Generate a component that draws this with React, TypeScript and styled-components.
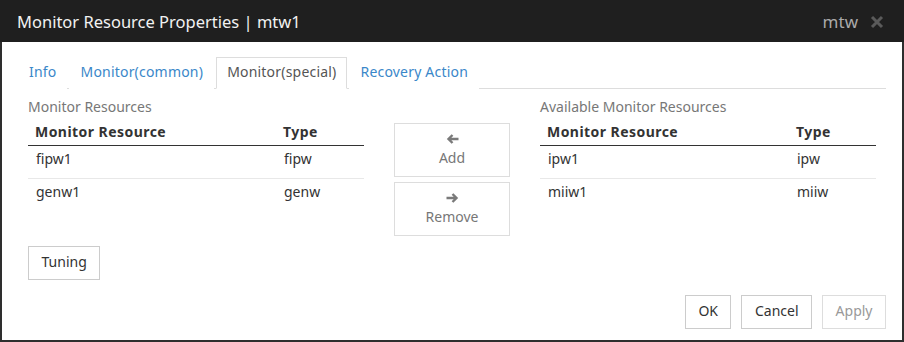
import React from "react"
import styled, { createGlobalStyle } from "styled-components"

const GlobalStyle = createGlobalStyle`
  body {
    margin: 0;
    font-family: "Noto Sans", "Liberation Sans", sans-serif;
    font-size: 14px;
    color: #333;
  }
  * { box-sizing: border-box; }
`

const Window = styled.div`
  width: 904px;
  height: 342px;
  border: 2px solid #2e2e2e;
  border-top: none;
  background: #fff;
  display: flex;
  flex-direction: column;
`

const Header = styled.header`
  height: 42px;
  flex: none;
  background: #1f1f1f;
  display: flex;
  align-items: center;
  margin: 0 -2px;
  padding: 0 20px 0 17px;
`

const Title = styled.h1`
  margin: 0;
  flex: 1;
  font-size: 16.5px;
  font-weight: normal;
  color: #f2f2f2;
`

const HostName = styled.span`
  font-size: 17px;
  color: #aaa;
  margin-right: 12px;
`

const CloseButton = styled.button`
  border: none;
  background: none;
  padding: 0;
  margin-top: 2px;
  width: 14px;
  height: 14px;
  display: flex;
  cursor: pointer;
`

const Body = styled.div`
  padding: 15px 16px 0;
  display: flex;
  flex-direction: column;
`

const TabBar = styled.ul`
  list-style: none;
  margin: 0;
  padding: 0;
  display: flex;
  border-bottom: 1px solid #ddd;
`

const Tab = styled.li<{ $active?: boolean }>`
  margin: 0 2px -1px 0;
  padding: 4px 10px 6px;
  line-height: 20px;
  letter-spacing: 0.2px;
  border: 1px solid ${p => (p.$active ? "#ddd" : "transparent")};
  border-bottom-color: ${p => (p.$active ? "#fff" : "transparent")};
  background: #fff;
  color: ${p => (p.$active ? "#555" : "#3a87c9")};
  cursor: pointer;
`

const Pane = styled.div`
  padding: 8px 10px 0;
`

const Columns = styled.div`
  display: grid;
  grid-template-columns: 336px 116px 336px;
  column-gap: 30px;
  align-items: start;
`

const Label = styled.div`
  line-height: 20px;
  color: #777;
`

const Table = styled.div<{ $nameWidth: number }>`
  display: grid;
  grid-template-columns: ${p => p.$nameWidth}px 1fr;
`

const HeadCell = styled.div`
  padding: 5px 8px 3px 7px;
  line-height: 20px;
  font-weight: bold;
  letter-spacing: 0.45px;
  color: #333;
  border-bottom: 1px solid #333;
`

const Cell = styled.div<{ $last?: boolean }>`
  padding: 3px 8px 9px;
  line-height: 20px;
  color: #333;
  border-bottom: 1px solid ${p => (p.$last ? "transparent" : "#e8e8e8")};
`

const Mover = styled.div`
  margin-top: 26px;
  display: flex;
  flex-direction: column;
  gap: 5px;
`

const MoveButton = styled.button`
  height: 54px;
  border: 1px solid #ddd;
  background: #fff;
  color: #777;
  font: inherit;
  line-height: 20px;
  display: flex;
  flex-direction: column;
  align-items: center;
  justify-content: center;
  gap: 4px;
  padding: 2px 0 0;
`

const Button = styled.button<{ $disabled?: boolean }>`
  height: 34px;
  padding: 0 12.5px 3px;
  font: inherit;
  line-height: 20px;
  background: #fff;
  color: ${p => (p.$disabled ? "#999" : "#333")};
  border: 1px solid ${p => (p.$disabled ? "#ddd" : "#ccc")};
`

const TuningRow = styled.div`
  margin-top: 10px;
`

const Footer = styled.div`
  margin-top: 15px;
  display: flex;
  justify-content: flex-end;
  gap: 10px;
`

const Arrow = ({ dir }: { dir: "left" | "right" }) => (
  <svg width="13" height="10" viewBox="0 0 13 10" style={{ display: "block" }}>
    <g transform={dir === "right" ? "translate(13 0) scale(-1 1)" : undefined}>
      <path d="M12.5 5H2.5M6.5 1L2.5 5L6.5 9" fill="none" stroke="#7a7a7a" strokeWidth="2.4" />
    </g>
  </svg>
)

type Row = { name: string; type: string }

const ResourceTable = ({ title, rows, nameWidth }: { title: string; rows: Row[]; nameWidth: number }) => (
  <div>
    <Label>{title}</Label>
    <Table $nameWidth={nameWidth}>
      <HeadCell>Monitor Resource</HeadCell>
      <HeadCell>Type</HeadCell>
      {rows.map((r, i) => (
        <React.Fragment key={r.name}>
          <Cell $last={i === rows.length - 1}>{r.name}</Cell>
          <Cell $last={i === rows.length - 1}>{r.type}</Cell>
        </React.Fragment>
      ))}
    </Table>
  </div>
)

const tabs = ["Info", "Monitor(common)", "Monitor(special)", "Recovery Action"]

export default function App() {
  return (
    <>
      <GlobalStyle />
      <Window>
        <Header>
          <Title>Monitor Resource Properties | mtw1</Title>
          <HostName>mtw</HostName>
          <CloseButton aria-label="close">
            <svg width="14" height="14" viewBox="0 0 14 14">
              <path d="M2 2L12 12M12 2L2 12" stroke="#5a5a5a" strokeWidth="3" />
            </svg>
          </CloseButton>
        </Header>
        <Body>
          <TabBar>
            {tabs.map(t => (
              <Tab key={t} $active={t === "Monitor(special)"}>
                {t}
              </Tab>
            ))}
          </TabBar>
          <Pane>
            <Columns>
              <ResourceTable
                title="Monitor Resources"
                nameWidth={248}
                rows={[
                  { name: "fipw1", type: "fipw" },
                  { name: "genw1", type: "genw" },
                ]}
              />
              <Mover>
                <MoveButton>
                  <Arrow dir="left" />
                  Add
                </MoveButton>
                <MoveButton>
                  <Arrow dir="right" />
                  Remove
                </MoveButton>
              </Mover>
              <ResourceTable
                title="Available Monitor Resources"
                nameWidth={249}
                rows={[
                  { name: "ipw1", type: "ipw" },
                  { name: "miiw1", type: "miiw" },
                ]}
              />
            </Columns>
            <TuningRow>
              <Button>Tuning</Button>
            </TuningRow>
          </Pane>
          <Footer>
            <Button>OK</Button>
            <Button>Cancel</Button>
            <Button $disabled>Apply</Button>
          </Footer>
        </Body>
      </Window>
    </>
  )
}
